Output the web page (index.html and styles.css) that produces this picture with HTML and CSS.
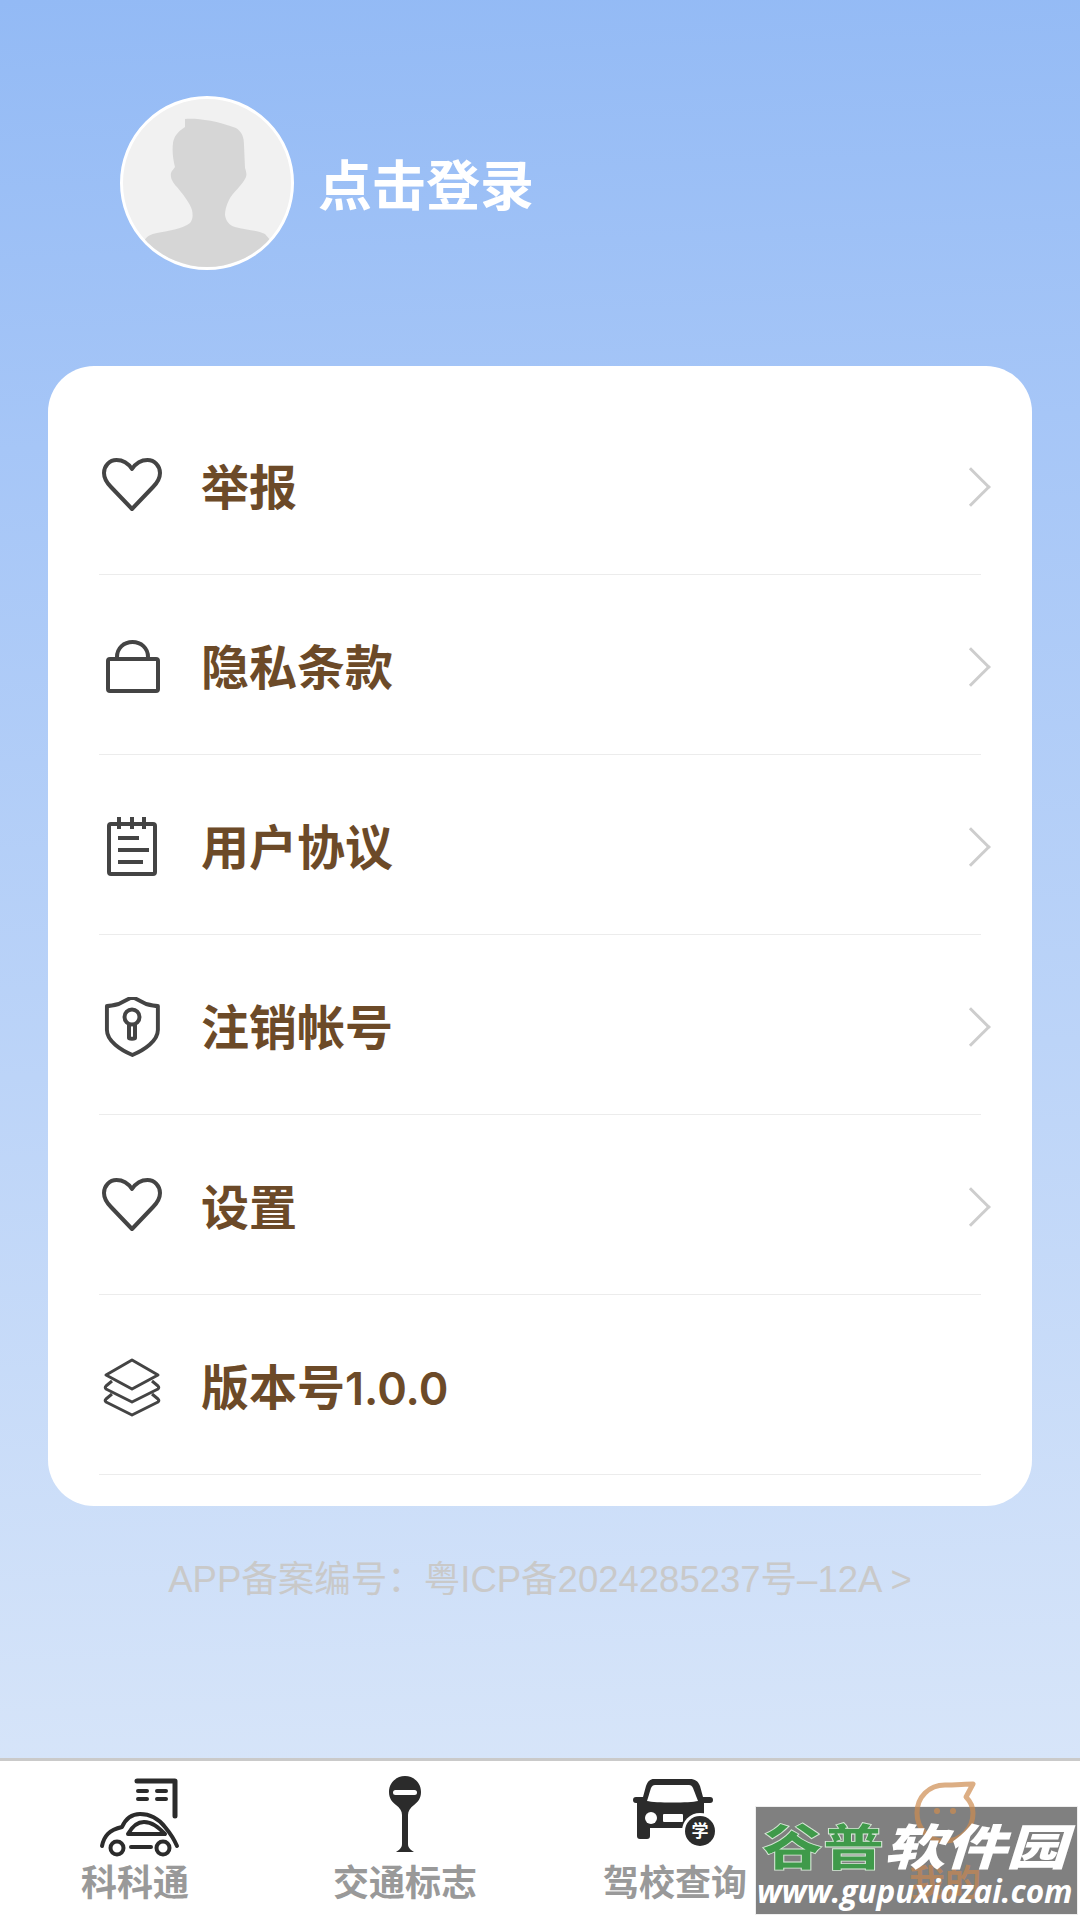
FILE: index.html
```html
<!DOCTYPE html>
<html lang="zh-CN">
<head>
<meta charset="UTF-8">
<title>我的</title>
<link rel="stylesheet" href="styles.css">
</head>
<body>
<div class="page">
  <div class="main">
    <!-- login header -->
    <div class="profile">
      <div class="avatar">
        <svg viewBox="0 0 168 168" width="168" height="168">
          <path fill="#d6d6d6" d="M62 20C72 19 92 21 113 29C119 33 121 38 121 46L122 69C123 72 124 75 123 78C119 87 110 93 106 101C103 107 102 112 102 116C103 122 106 126 112 128C122 131 134 131 142 135L148 142L130 172H40L21 142C24 137 28 135 34 134C44 132 60 130 67 124C70 120 70 116 69 111C67 104 59 94 54 88C50 84 47 79 48 74C49 71 51 70 52 68C50 60 49 52 50 44C51 38 54 33 62 28Z"/>
        </svg>
      </div>
      <div class="login-text">点击登录</div>
    </div>

    <!-- menu -->
    <div class="card">
      <div class="row">
        <svg class="row-icon" viewBox="0 0 60 60" width="60" height="60"><path class="line" d="M30 12C26 6 20 3 14.500 3C7.500 3 2 9 2 16C2 22 5 26 9 30L30 52L51 30C55 26 58 22 58 16C58 9 52.500 3 45.500 3C40 3 34 6 30 12Z"/></svg>
        <span class="row-label">举报</span>
        <span class="chevron"></span>
      </div>
      <div class="row">
        <svg class="row-icon" viewBox="0 0 60 60" width="60" height="60"><rect class="line" x="6" y="22" width="50" height="32" rx="2"/><path class="line" d="M15 22V20C15 11 22 5 30.500 5C39 5 46 11 46 20V22"/></svg>
        <span class="row-label">隐私条款</span>
        <span class="chevron"></span>
      </div>
      <div class="row">
        <svg class="row-icon" viewBox="0 0 60 60" width="60" height="60"><rect class="line" x="7" y="7" width="46" height="50" rx="2"/><path class="line" d="M17 0V12M30 0V12M42 0V12M16 21H37M16 33H47M16 45H41"/></svg>
        <span class="row-label">用户协议</span>
        <span class="chevron"></span>
      </div>
      <div class="row">
        <svg class="row-icon" viewBox="0 0 60 60" width="60" height="60"><path class="line" d="M30 0L44 7C48 8 52 9 56 9V33C56 44 42 53 30 58C18 53 4 44 4 33V9C8 9 12 8 16 7Z" transform="translate(1 0) scale(0.98 1)"/><circle class="line" cx="30" cy="20" r="7.500"/><path class="line" d="M27 27V41C27 42 33 42 33 41V27"/></svg>
        <span class="row-label">注销帐号</span>
        <span class="chevron"></span>
      </div>
      <div class="row">
        <svg class="row-icon" viewBox="0 0 60 60" width="60" height="60"><path class="line" d="M30 12C26 6 20 3 14.500 3C7.500 3 2 9 2 16C2 22 5 26 9 30L30 52L51 30C55 26 58 22 58 16C58 9 52.500 3 45.500 3C40 3 34 6 30 12Z"/></svg>
        <span class="row-label">设置</span>
        <span class="chevron"></span>
      </div>
      <div class="row">
        <svg class="row-icon" viewBox="0 0 60 60" width="60" height="60"><path class="line thin" d="M30 3L56 18L30 32L4 18Z"/><path class="line thin" d="M10 24L4 29C3 30 3 31 4 32L30 45L56 32C57 31 57 30 56 29L50 24"/><path class="line thin" d="M10 37L4 42C3 43 3 44 4 45L30 58L56 45C57 44 57 43 56 42L50 37"/></svg>
        <span class="row-label">版本号<span class="ver">1.0.0</span></span>
      </div>
    </div>

    <div class="record">APP备案编号：粤ICP备2024285237号–12A &gt;</div>
  </div>

  <!-- bottom tabs -->
  <div class="tabbar">
    <div class="tab">
      <svg class="tab-icon" viewBox="0 0 90 80" width="90" height="80">
        <path class="solid-line" d="M47 8H85V43"/>
        <path class="dash" d="M48 18H57M67 18H76M48 26H57M67 26H76"/>
        <path class="car-line" d="M12 73C14 63 19 57 32 54C36 45 43 41 50 41C60 41 68 45 75 54C80 60 84 66 87 73"/>
        <circle class="car-line" cx="27" cy="75" r="6.500"/>
        <circle class="car-line" cx="73" cy="75" r="6.500"/>
        <path class="car-line" d="M41 74H61M38 61C43 52 48 49 54 49C62 49 68 54 75 61Z"/>
      </svg>
      <span class="tab-label">科科通</span>
    </div>
    <div class="tab">
      <svg class="tab-icon" viewBox="0 0 90 80" width="90" height="80">
        <path fill="#2b2b2b" d="M45 3C54 3 61 10 61 19C61 25 58 29 54 32C50 35 48 38 48 42V71C48 75 51 77 54 79H36C39 77 42 75 42 71V42C42 38 40 35 36 32C32 29 29 25 29 19C29 10 36 3 45 3Z"/>
        <rect x="33" y="17" width="24" height="5" rx="2.500" fill="#fff"/>
      </svg>
      <span class="tab-label">交通标志</span>
    </div>
    <div class="tab">
      <svg class="tab-icon" viewBox="0 0 90 80" width="90" height="80">
        <path fill="#2b2b2b" d="M24 6H60C65 6 68 8 70 13L73 24H80C82 24 83 25 83 27C83 29 82 30 80 30H74V55H20V63C20 65 19 66 17 66H10C8 66 7 65 7 63V30H6C4 30 3 29 3 27C3 25 4 24 6 24H13L16 13C18 8 20 6 24 6Z"/>
        <path fill="#fff" d="M25 12H59C61 12 62 13 63 15L68 28C60 30 25 30 17 28L21 15C22 13 23 12 25 12Z"/>
        <circle cx="21" cy="45" r="6" fill="#fff"/>
        <rect x="33" y="41" width="20" height="8" rx="1" fill="#fff"/>
        <circle cx="70" cy="58" r="18" fill="#fff"/>
        <circle cx="70" cy="58" r="15" fill="#2b2b2b"/>
        <text class="badge-text" x="70" y="64">学</text>
      </svg>
      <span class="tab-label">驾校查询</span>
    </div>
    <div class="tab tab-on">
      <svg class="tab-icon" viewBox="0 0 90 80" width="90" height="80">
        <path class="me-line" d="M73 11C66 11 55 12 45 12C29 12 17 24 17 40C17 56 29 68 45 68C61 68 73 56 73 40C73 33 70 28 66 24Z"/>
        <circle class="me-dot" cx="37" cy="38" r="3"/>
        <circle class="me-dot" cx="53" cy="38" r="3"/>
      </svg>
      <span class="tab-label">我的</span>
    </div>
  </div>

  <div class="watermark">
    <div class="wm-top"><span class="wm-green">谷普</span><span class="wm-white">软件园</span></div>
    <div class="wm-url">www.gupuxiazai.com</div>
  </div>
</div>
</body>
</html>
```

FILE: styles.css
```css
* { box-sizing:border-box; }
html, body { margin:0; padding:0; }
body { font-family:"Liberation Sans", "Noto Sans CJK SC", sans-serif; background:#fff; }
.page { position:relative; width:1080px; height:1920px; overflow:hidden; display:flex; flex-direction:column; }

.main { flex:1; padding:96px 48px 0; background:linear-gradient(178deg, #93baf5 0%, #a6c6f7 25%, #bcd4f8 60%, #d7e5f9 100%); }

.profile { display:flex; align-items:center; padding-left:72px; height:174px; }
.avatar { width:174px; height:174px; border-radius:50%; border:3px solid #fff; background:#f1f1f1; overflow:hidden; flex:none; }
.avatar svg { display:block; }
.login-text { margin-left:24px; font-family:"Noto Sans CJK SC", sans-serif; font-size:54px; font-weight:700; color:#fff; line-height:1; }

.card { margin-top:96px; height:1140px; padding:29px 51px 0; background:#fff; border-radius:46px; }
.row { height:180px; display:flex; align-items:center; border-bottom:1px solid #ececec; }
.row-icon { flex:none; margin:5px 0 0 3px; }
.row-label { margin:6px 0 0 39px; font-family:Inter, "Noto Sans CJK SC", sans-serif; font-size:48px; font-weight:600; color:#6c4a28; line-height:1; }
.ver { font-size:45px; }
.chevron { margin:5px -4px 0 auto; width:28px; height:28px; border-top:3px solid #cdcdcd; border-right:3px solid #cdcdcd; transform:rotate(45deg); }

.line { fill:none; stroke:#444; stroke-width:4; stroke-linejoin:round; }
.line.thin { stroke-width:3; }

.record { margin-top:54px; text-align:center; font-size:36.500px; color:#c9c9c9; line-height:40px; white-space:nowrap; }

.tabbar { height:162px; flex:none; display:flex; background:#fff; border-top:3px solid #cacaca; }
.tab { flex:1; display:flex; flex-direction:column; align-items:center; padding-top:12px; }
.tab-icon { display:block; overflow:visible; }
.tab-label { font-family:"Noto Sans CJK SC", sans-serif; font-size:36px; font-weight:700; color:#999; line-height:44px; margin-top:5px; }
.solid-line { fill:none; stroke:#2b2b2b; stroke-width:5; stroke-linecap:round; stroke-linejoin:round; }
.dash { fill:none; stroke:#2b2b2b; stroke-width:4; stroke-linecap:round; }
.car-line { fill:none; stroke:#2b2b2b; stroke-width:4; stroke-linecap:round; stroke-linejoin:round; }
.badge-text { font-family:"Noto Sans CJK SC", sans-serif; font-size:17px; font-weight:700; fill:#fff; text-anchor:middle; }

/* last tab shows through the stamp, so it sits above its grey and below its text */
.tab-on .tab-icon, .tab-on .tab-label { position:relative; z-index:2; }
.tab-on .tab-label { color:rgba(200,135,80,.7); }
.me-line { fill:none; stroke:rgba(205,140,80,.7); stroke-width:5; stroke-linejoin:round; }
.me-dot { fill:rgba(205,140,80,.7); }

.watermark { position:absolute; left:755px; top:1806px; width:323px; height:109px; background:#808080; border:1px solid #eee; }
.wm-top { position:relative; z-index:3; height:66px; padding:15px 0 0 6px; font-family:"Noto Sans CJK SC", sans-serif; font-size:61px; font-weight:900; line-height:61px; white-space:nowrap; transform:scaleY(.8); transform-origin:left top; }
.wm-green { color:#3f9a4a; -webkit-text-stroke:1px #d8e8d8; }
.wm-white { color:#fff; font-style:italic; }
.wm-url { position:relative; z-index:3; padding-left:1px; font-family:"Open Sans", sans-serif; font-size:31.500px; font-weight:700; font-style:italic; color:#fff; line-height:36px; white-space:nowrap; }
```
